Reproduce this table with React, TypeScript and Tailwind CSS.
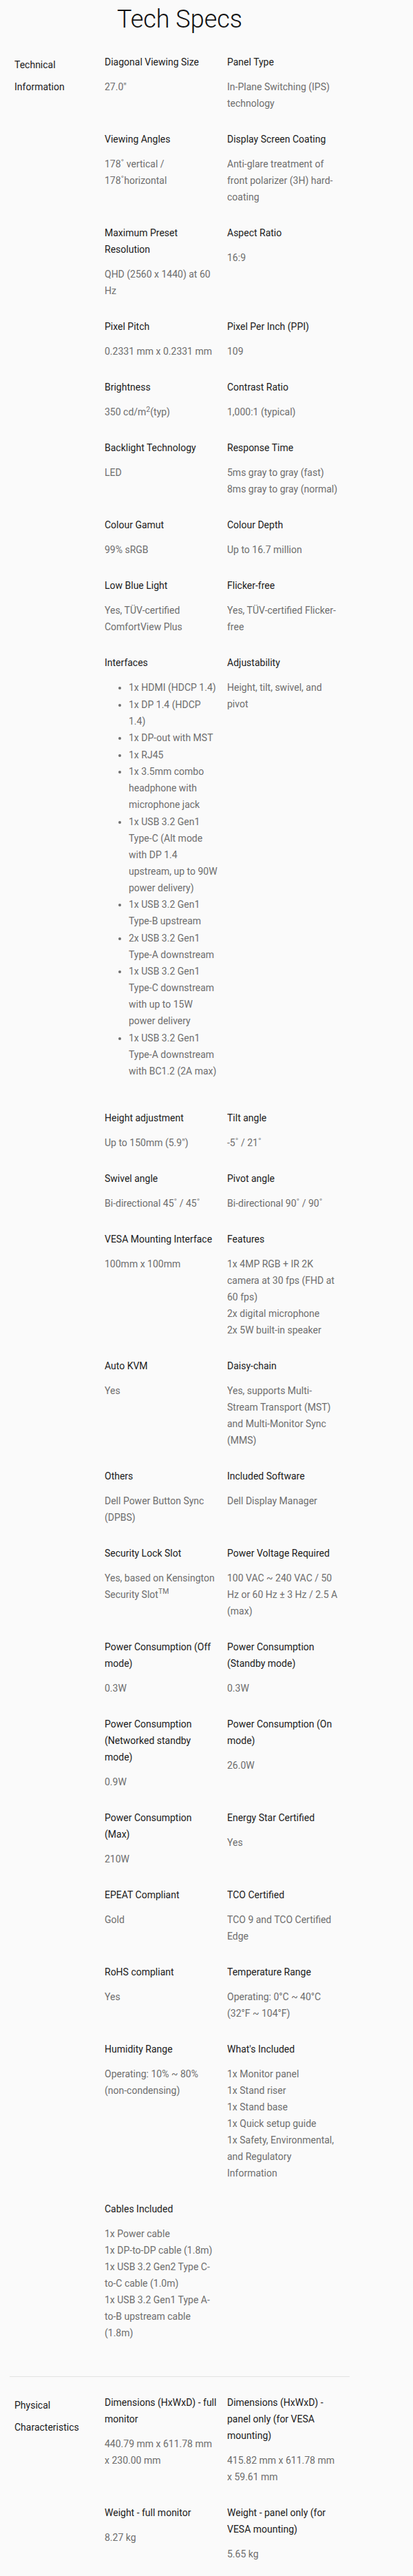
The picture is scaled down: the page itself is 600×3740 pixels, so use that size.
import type { ReactNode } from "react";

interface Spec {
  label: string;
  value: ReactNode;
}

const interfaces = [
  "1x HDMI (HDCP 1.4)",
  "1x DP 1.4 (HDCP 1.4)",
  "1x DP-out with MST",
  "1x RJ45",
  "1x 3.5mm combo headphone with microphone jack",
  "1x USB 3.2 Gen1 Type-C (Alt mode with DP 1.4 upstream, up to 90W power delivery)",
  "1x USB 3.2 Gen1 Type-B upstream",
  "2x USB 3.2 Gen1 Type-A downstream",
  "1x USB 3.2 Gen1 Type-C downstream with up to 15W power delivery",
  "1x USB 3.2 Gen1 Type-A downstream with BC1.2 (2A max)",
];

const lines = (items: string[]) => items.map((l) => <div key={l}>{l}</div>);

const technical: Spec[] = [
  { label: "Diagonal Viewing Size", value: '27.0"' },
  { label: "Panel Type", value: "In-Plane Switching (IPS) technology" },
  { label: "Viewing Angles", value: "178˚ vertical / 178˚horizontal" },
  {
    label: "Display Screen Coating",
    value: "Anti-glare treatment of front polarizer (3H) hard-coating",
  },
  { label: "Maximum Preset Resolution", value: "QHD (2560 x 1440) at 60 Hz" },
  { label: "Aspect Ratio", value: "16:9" },
  { label: "Pixel Pitch", value: "0.2331 mm x 0.2331 mm" },
  { label: "Pixel Per Inch (PPI)", value: "109" },
  {
    label: "Brightness",
    value: (
      <>
        350 cd/m<sup>2</sup>(typ)
      </>
    ),
  },
  { label: "Contrast Ratio", value: "1,000:1 (typical)" },
  { label: "Backlight Technology", value: "LED" },
  {
    label: "Response Time",
    value: lines(["5ms gray to gray (fast)", "8ms gray to gray (normal)"]),
  },
  { label: "Colour Gamut", value: "99% sRGB" },
  { label: "Colour Depth", value: "Up to 16.7 million" },
  { label: "Low Blue Light", value: "Yes, TÜV-certified ComfortView Plus" },
  { label: "Flicker-free", value: "Yes, TÜV-certified Flicker-free" },
  {
    label: "Interfaces",
    value: (
      <ul className="mb-4 list-disc pl-[35px]">
        {interfaces.map((item) => (
          <li key={item} className="mb-[0.5px]">
            {item}
          </li>
        ))}
      </ul>
    ),
  },
  { label: "Adjustability", value: "Height, tilt, swivel, and pivot" },
  { label: "Height adjustment", value: 'Up to 150mm (5.9")' },
  { label: "Tilt angle", value: "-5˚ / 21˚" },
  { label: "Swivel angle", value: "Bi-directional 45˚ / 45˚" },
  { label: "Pivot angle", value: "Bi-directional 90˚ / 90˚" },
  { label: "VESA Mounting Interface", value: "100mm x 100mm" },
  {
    label: "Features",
    value: lines([
      "1x 4MP RGB + IR 2K camera at 30 fps (FHD at 60 fps)",
      "2x digital microphone",
      "2x 5W built-in speaker",
    ]),
  },
  { label: "Auto KVM", value: "Yes" },
  {
    label: "Daisy-chain",
    value:
      "Yes, supports Multi-Stream Transport (MST) and Multi-Monitor Sync (MMS)",
  },
  { label: "Others", value: "Dell Power Button Sync (DPBS)" },
  { label: "Included Software", value: "Dell Display Manager" },
  {
    label: "Security Lock Slot",
    value: (
      <>
        Yes, based on Kensington Security Slot<sup>TM</sup>
      </>
    ),
  },
  {
    label: "Power Voltage Required",
    value: "100 VAC ~ 240 VAC / 50 Hz or 60 Hz ± 3 Hz / 2.5 A (max)",
  },
  { label: "Power Consumption (Off mode)", value: "0.3W" },
  { label: "Power Consumption (Standby mode)", value: "0.3W" },
  { label: "Power Consumption (Networked standby mode)", value: "0.9W" },
  { label: "Power Consumption (On mode)", value: "26.0W" },
  { label: "Power Consumption (Max)", value: "210W" },
  { label: "Energy Star Certified", value: "Yes" },
  { label: "EPEAT Compliant", value: "Gold" },
  { label: "TCO Certified", value: "TCO 9 and TCO Certified Edge" },
  { label: "RoHS compliant", value: "Yes" },
  { label: "Temperature Range", value: "Operating: 0°C ~ 40°C (32°F ~ 104°F)" },
  { label: "Humidity Range", value: "Operating: 10% ~ 80% (non-condensing)" },
  {
    label: "What's Included",
    value: lines([
      "1x Monitor panel",
      "1x Stand riser",
      "1x Stand base",
      "1x Quick setup guide",
      "1x Safety, Environmental, and Regulatory Information",
    ]),
  },
  {
    label: "Cables Included",
    value: lines([
      "1x Power cable",
      "1x DP-to-DP cable (1.8m)",
      "1x USB 3.2 Gen2 Type C-to-C cable (1.0m)",
      "1x USB 3.2 Gen1 Type A-to-B upstream cable (1.8m)",
    ]),
  },
];

const physical: Spec[] = [
  {
    label: "Dimensions (HxWxD) - full monitor",
    value: "440.79 mm x 611.78 mm x 230.00 mm",
  },
  {
    label: "Dimensions (HxWxD) - panel only (for VESA mounting)",
    value: "415.82 mm x 611.78 mm x 59.61 mm",
  },
  { label: "Weight - full monitor", value: "8.27 kg" },
  { label: "Weight - panel only (for VESA mounting)", value: "5.65 kg" },
];

function SpecSection({
  title,
  specs,
  className,
}: {
  title: string;
  specs: Spec[];
  className: string;
}) {
  return (
    <section className={`flex ${className}`}>
      {/* Titulo de la seccion */}
      <div className="w-[138px] shrink-0 pl-[7px]">
        <h2 className="max-w-[110px] text-[14px] leading-[32px] text-[#1b1b1b]">
          {title}
        </h2>
      </div>

      {/* Grilla de especificaciones */}
      <div className="grid grid-cols-[165.5px_163px] gap-x-[12.5px] gap-y-7 text-[14px] leading-[24px]">
        {specs.map((spec) => (
          <div key={spec.label}>
            <div className="mb-3 text-[#1b1b1b]">{spec.label}</div>
            <div className="text-[#6e6e6e]">{spec.value}</div>
          </div>
        ))}
      </div>
    </section>
  );
}

export default function App() {
  return (
    <div className="min-h-screen bg-[#fafafa] font-['Roboto',sans-serif]">
      <div className="ml-[14px] w-[494px] pb-[19px]">
        <h1 className="pt-[4px] text-center text-[36px] font-light leading-[48px] text-[#111]">
          Tech Specs
        </h1>

        <SpecSection
          title="Technical Information"
          specs={technical}
          className="pt-[26px] pb-[51px]"
        />

        <SpecSection
          title="Physical Characteristics"
          specs={physical}
          className="border-t border-[#e2e2e2] pt-[25px]"
        />
      </div>
    </div>
  );
}
